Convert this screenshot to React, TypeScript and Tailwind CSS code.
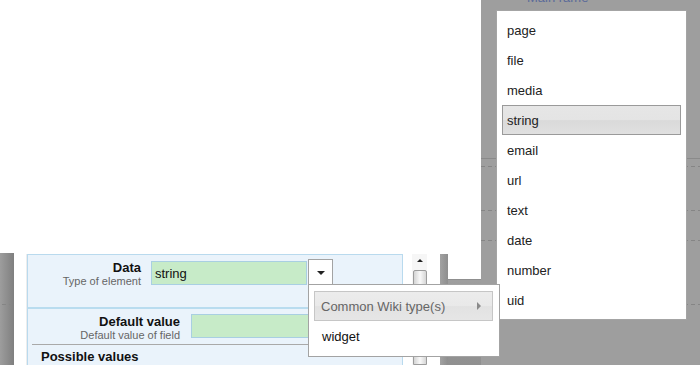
import React from "react";

const dash = "h-px bg-[repeating-linear-gradient(90deg,#858585_0_4px,transparent_4px_7px)]";

function ListItem({ label, active }: { label: string; active?: boolean }) {
  return (
    <div
      className={
        "h-[30px] flex items-center pl-[4px] border " +
        (active
          ? "border-[#9a9a9a] bg-[linear-gradient(#e6e6e6_0%,#e4e4e4_50%,#dadada_52%,#e0e0e0_100%)]"
          : "border-transparent")
      }
    >
      {label}
    </div>
  );
}

export default function App() {
  const items = ["page", "file", "media", "string", "email", "url", "text", "date", "number", "uid"];
  return (
    <div
      className="relative w-[700px] h-[365px] overflow-hidden flex bg-[#9e9e9e] text-[13px] leading-[15px]"
      style={{ fontFamily: '"Liberation Sans", Arial, sans-serif' }}
    >
      {/* left part */}
      <div className="w-[481px] flex flex-col shrink-0">
        <div className="h-[253px] bg-white shrink-0" />
        <div className="flex flex-1">
          <div className="w-[14px] bg-gradient-to-r from-[#9d9d9d] to-[#7f7f7f] flex flex-col">
            <div className={"mt-[51px] ml-[2px] w-[10px] " + dash} />
          </div>
          <div className="w-[426px] bg-white flex pt-px">
            <div className="w-[13px] flex justify-end">
              <div className="w-px bg-[#ededed]" />
            </div>
            {/* panel */}
            <div className="w-[376px] bg-[#eaf3fb] border-t border-l border-r border-[#b9daee] flex flex-col">
              {/* row 1 */}
              <div className="h-[54px] flex border-b-2 border-[#b9dcef]">
                <div className="w-[113px] pt-[5px] text-right">
                  <div className="font-bold text-[#111]">Data</div>
                  <div className="text-[11px] leading-[13px] text-[#666]">Type of element</div>
                </div>
                <div className="ml-[10px] mt-[6px] w-[156px] h-[24px] bg-[#c7ebc8] border border-[#a9cfe2] flex items-center pl-[3px] text-[#111]">
                  string
                </div>
                <div className="ml-px mt-[4px] w-[25px] h-[27px] bg-white border border-[#a3a3a3] flex items-center justify-center">
                  <div className="w-0 h-0 border-l-[4px] border-r-[4px] border-t-[4px] border-l-transparent border-r-transparent border-t-[#222]" />
                </div>
              </div>
              {/* row 2 */}
              <div className="h-[35px] flex">
                <div className="w-[152px] pt-[5px] text-right">
                  <div className="font-bold text-[#111]">Default value</div>
                  <div className="text-[11px] leading-[13px] text-[#666]">Default value of field</div>
                </div>
                <div className="ml-[11px] mt-[5px] w-[156px] h-[24px] bg-[#c7ebc8] border border-[#a9cfe2]" />
              </div>
              <div className="ml-[4px] h-px bg-[#a9a9a9]" />
              <div className="pl-[13px] pt-[4px] font-bold text-[#111]">Possible values</div>
            </div>
            {/* scrollbar */}
            <div className="ml-[9px] w-[15px] bg-[#f6f6f6] flex flex-col items-center">
              <div className="mt-[5px] w-0 h-0 border-l-[3px] border-r-[3px] border-b-[3px] border-l-transparent border-r-transparent border-b-[#222]" />
              <div className="mt-[8px] w-[14px] flex-1 rounded-t-[2px] border border-[#9c9c9c] bg-gradient-to-r from-[#d4d4d4] via-[#f9f9f9] to-[#d6d6d6]" />
            </div>
          </div>
          <div className="w-[8px] flex flex-col">
            <div className="h-px bg-white" />
            <div className="flex-1 bg-gradient-to-r from-[#a2a2a2] to-[#8e8e8e]" />
          </div>
          <div className="w-[33px] flex flex-col">
            <div className="h-[27px] bg-white border-b border-[#8f8f8f]" />
            <div className="flex-1 bg-gradient-to-b from-[#9e9e9e] to-[#909090]" />
          </div>
        </div>
      </div>

      {/* right grey part */}
      <div className="flex-1 flex flex-col">
        <div className="ml-[46px] -mt-[10px] text-[13px] text-[#5a6a9a]">Main rame</div>
        <div className="mt-[153px] h-px bg-[#8a8a8a]" />
        <div className={"mt-[7px] " + dash} />
        <div className={"mt-[43px] " + dash} />
        <div className={"mt-[29px] " + dash} />
        <div className={"mt-[63px] " + dash} />
      </div>

      {/* dropdown list */}
      <div className="absolute left-[496px] top-[10px] w-[191px] h-[310px] bg-white border border-[#a4a4a4] px-[5px] pt-[4px] text-[#222]">
        {items.map((it) => (
          <ListItem key={it} label={it} active={it === "string"} />
        ))}
      </div>

      {/* sub menu */}
      <div className="absolute left-[308px] top-[284px] w-[192px] h-[73px] bg-white border border-[#a3a3a3] pl-[5px] pt-[6px]">
        <div className="w-[179px] h-[30px] flex items-center justify-between pl-[6px] pr-[11px] border border-[#c6c6c6] bg-[linear-gradient(#ececec_0%,#e9e9e9_50%,#e2e2e2_52%,#e6e6e6_100%)] text-[#666]">
          <span>Common Wiki type(s)</span>
          <div className="w-0 h-0 border-t-[4px] border-b-[4px] border-l-[4px] border-t-transparent border-b-transparent border-l-[#8a8a8a]" />
        </div>
        <div className="h-[30px] flex items-center pl-[8px] text-[#111]">widget</div>
      </div>
    </div>
  );
}
